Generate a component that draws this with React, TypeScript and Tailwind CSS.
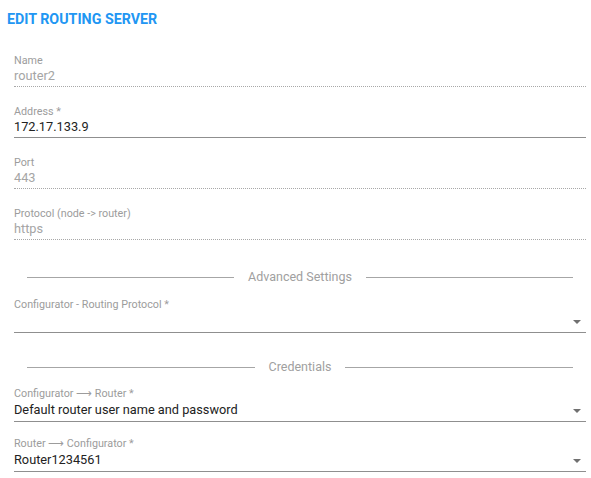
import React from "react";

const font = { fontFamily: "Roboto, 'Liberation Sans', sans-serif" };

function TextField({ label, value, disabled, className = "" }: { label: string; value: string; disabled?: boolean; className?: string }) {
  return (
    <div className={`flex flex-col pb-[2px] border-b ${disabled ? "border-dotted border-[#a8a8a8]" : "border-solid border-[#8f8f8f]"} ${className}`}>
      <div className="text-[10.75px] leading-[13px] text-[#9c9c9c]">{label}</div>
      <div className={`mt-px text-[12.75px] leading-[16px] ${disabled ? "text-[#a5a5a5]" : "text-[#222222]"}`}>{value}</div>
    </div>
  );
}

function SelectField({ label, value, className = "" }: { label: string; value: string; className?: string }) {
  return (
    <div className={`flex flex-col pb-[3px] border-b border-solid border-[#8f8f8f] ${className}`}>
      <div className="text-[10.75px] leading-[13px] text-[#9c9c9c]">{label}</div>
      <div className="mt-[2px] flex items-center justify-between h-[16px]">
        <span className="text-[12.75px] leading-[16px] text-[#222222]">{value}</span>
        <span className="mr-[5px] mt-[2px] w-0 h-0 border-l-[4px] border-r-[4px] border-t-[4px] border-l-transparent border-r-transparent border-t-[#707070]" />
      </div>
    </div>
  );
}

function Divider({ text, className = "" }: { text: string; className?: string }) {
  return (
    <div className={`flex items-center gap-[14px] mx-[13px] h-[16px] ${className}`}>
      <div className="flex-1 h-px bg-[#a6a6a6]" />
      <span className="text-[12.5px] leading-[16px] text-[#a0a0a0]">{text}</span>
      <div className="flex-1 h-px bg-[#a6a6a6]" />
    </div>
  );
}

export default function App() {
  return (
    <div className="w-[591px] h-[478px] bg-white overflow-hidden" style={font}>
      <div className="pt-[11px] pl-[7px] text-[14.25px] leading-[16px] font-bold text-[#2196f3]">EDIT ROUTING SERVER</div>
      <div className="flex flex-col pl-[14px] pr-[5px]">
        <TextField className="mt-[27px]" label="Name" value="router2" disabled />
        <TextField className="mt-[18px]" label="Address *" value="172.17.133.9" />
        <TextField className="mt-[18px]" label="Port" value="443" disabled />
        <TextField className="mt-[18px]" label="Protocol (node -> router)" value="https" disabled />
        <Divider className="mt-[29px]" text="Advanced Settings" />
        <SelectField className="mt-[13px]" label="Configurator - Routing Protocol *" value="" />
        <Divider className="mt-[26px]" text="Credentials" />
        <SelectField className="mt-[12px]" label="Configurator ⟶ Router *" value="Default router user name and password" />
        <SelectField className="mt-[15px]" label="Router ⟶ Configurator *" value="Router1234561" />
      </div>
    </div>
  );
}
